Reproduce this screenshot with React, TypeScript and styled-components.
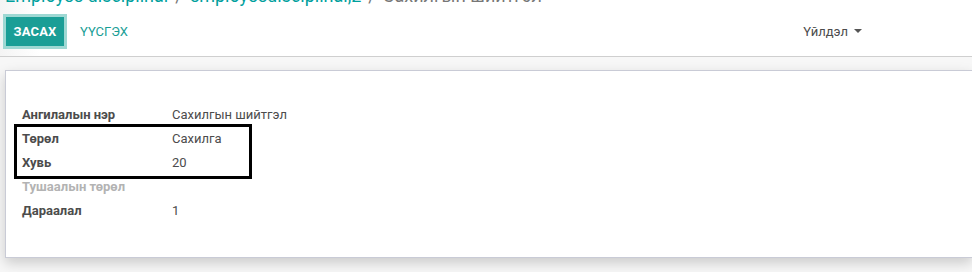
import React from "react";
import styled, { createGlobalStyle } from "styled-components";

const Global = createGlobalStyle`
  html, body { margin: 0; padding: 0; }
  body {
    font-family: Roboto, "Noto Sans", "Liberation Sans", sans-serif;
    font-size: 13px;
    color: #4c4c4c;
    background: #f9f9f9;
    overflow: hidden;
  }
`;

const Page = styled.div`
  width: 972px;
  height: 272px;
  display: flex;
  flex-direction: column;
  overflow: hidden;
`;

const ControlPanel = styled.div`
  background: linear-gradient(to right, #f4f4f4 0px, #ffffff 40px);
  border-bottom: 1px solid #cfcfcf;
  padding: 0 5px 0 5px;
  height: 57px;
  box-sizing: border-box;
  display: flex;
  flex-direction: column;
`;

const Breadcrumb = styled.div`
  margin-top: -15px;
  height: 22px;
  line-height: 22px;
  font-size: 18px;
  white-space: nowrap;
  display: flex;
  gap: 7px;
`;

const Crumb = styled.span<{ $active?: boolean }>`
  color: ${(p) => (p.$active ? "#777777" : "#00a09d")};
`;

const Sep = styled.span`
  color: #777777;
`;

const ButtonRow = styled.div`
  display: flex;
  align-items: center;
  margin-top: 7px;
`;

const PrimaryButton = styled.button`
  font-family: inherit;
  background: #1a9e96;
  color: #fff;
  border: 3px solid #9ed8d3;
  font-size: 13px;
  font-weight: 700;
  height: 35px;
  width: 64px;
  margin-left: -2px;
  padding: 0;
  letter-spacing: 0.2px;
`;

const LinkButton = styled.button`
  font-family: inherit;
  background: transparent;
  border: none;
  color: #1a9e96;
  font-size: 13px;
  padding: 0;
  margin-left: 13px;
`;

const Spacer = styled.div`
  flex: 1;
`;

const Dropdown = styled.div`
  display: flex;
  align-items: center;
  gap: 6px;
  color: #4c4c4c;
  font-size: 13px;
  margin-right: 105px;
`;

const Caret = styled.span`
  width: 0;
  height: 0;
  border-left: 4px solid transparent;
  border-right: 4px solid transparent;
  border-top: 4px solid #555;
  margin-top: -2px;
`;

const SheetArea = styled.div`
  flex: 1;
  background: #f7f7f7;
  padding: 13px 0 0 5px;
`;

const Sheet = styled.div`
  position: relative;
  background: #fff;
  border: 1px solid #c9cbd6;
  border-right: none;
  height: 188px;
  box-shadow: 0 5px 12px rgba(0, 0, 0, 0.18);
  padding: 31px 0 0 16px;
  box-sizing: border-box;
`;

const FieldGrid = styled.div`
  display: grid;
  grid-template-columns: 150px auto;
  grid-auto-rows: 24px;
  align-items: center;
`;

const Label = styled.div<{ $muted?: boolean }>`
  font-weight: 700;
  color: ${(p) => (p.$muted ? "#b3b3b3" : "#4c4c4c")};
  font-size: 13px;
`;

const Value = styled.div`
  color: #4c4c4c;
  font-size: 13px;
`;

const Highlight = styled.div`
  position: absolute;
  left: 8px;
  top: 53px;
  width: 232px;
  height: 49px;
  border: 3px solid #000;
`;

const fields: { label: string; value: string; muted?: boolean }[] = [
  { label: "Ангилалын нэр", value: "Сахилгын шийтгэл" },
  { label: "Төрөл", value: "Сахилга" },
  { label: "Хувь", value: "20" },
  { label: "Тушаалын төрөл", value: "", muted: true },
  { label: "Дараалал", value: "1" },
];

export default function App() {
  return (
    <Page>
      <Global />
      <ControlPanel>
        <Breadcrumb>
          <Crumb>Employee disciplinal</Crumb>
          <Sep>/</Sep>
          <Crumb>employeedisciplinal,2</Crumb>
          <Sep>/</Sep>
          <Crumb $active>Сахилгын шийтгэл</Crumb>
        </Breadcrumb>
        <ButtonRow>
          <PrimaryButton>ЗАСАХ</PrimaryButton>
          <LinkButton>ҮҮСГЭХ</LinkButton>
          <Spacer />
          <Dropdown>
            Үйлдэл <Caret />
          </Dropdown>
        </ButtonRow>
      </ControlPanel>
      <SheetArea>
        <Sheet>
          <FieldGrid>
            {fields.map((f) => (
              <React.Fragment key={f.label}>
                <Label $muted={f.muted}>{f.label}</Label>
                <Value>{f.value}</Value>
              </React.Fragment>
            ))}
          </FieldGrid>
          <Highlight />
        </Sheet>
      </SheetArea>
    </Page>
  );
}
